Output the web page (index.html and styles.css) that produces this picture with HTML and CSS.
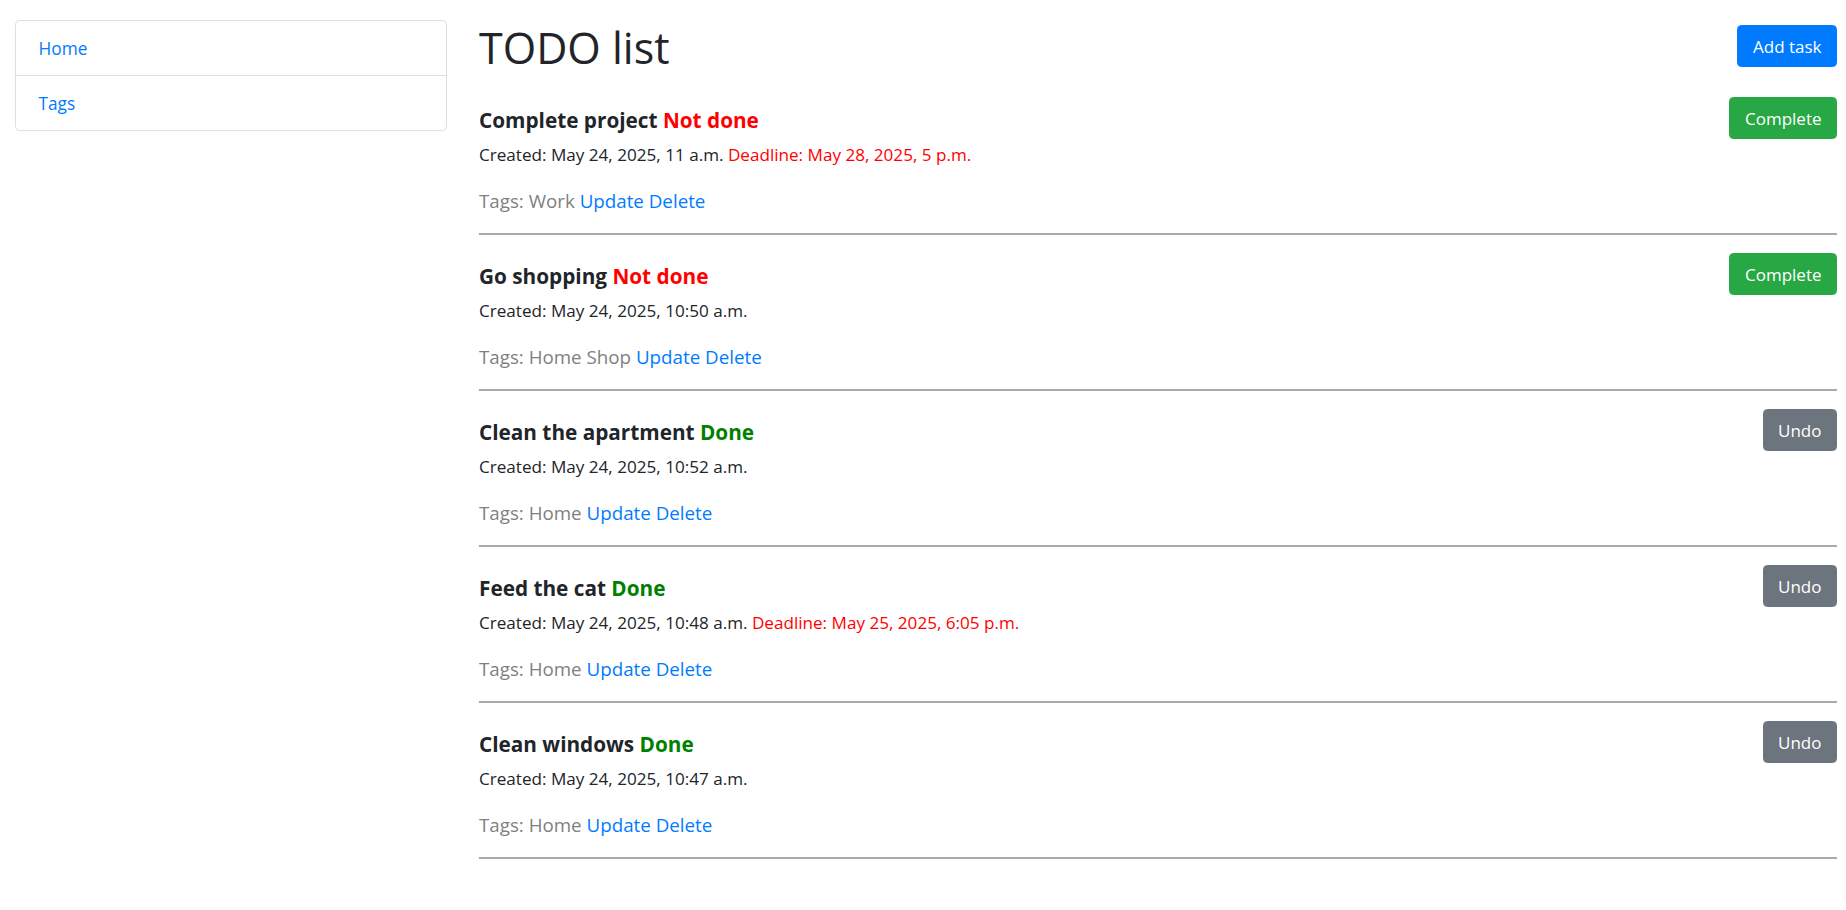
FILE: index.html
```html
<!DOCTYPE html>
<html lang="en">
<head>
<meta charset="utf-8">
<title>TODO list</title>
<link rel="stylesheet" href="styles.css">
</head>
<body>
<div class="layout">
  <nav class="sidebar">
    <a class="nav-item" href="#">Home</a>
    <a class="nav-item" href="#">Tags</a>
  </nav>
  <main class="main">
    <div class="page-head">
      <h1 class="page-title">TODO list</h1>
      <a class="btn btn-primary" href="#">Add task</a>
    </div>

    <div class="task">
      <div class="task-head">
        <h5 class="task-title">Complete project <span class="status not-done">Not done</span></h5>
        <button class="btn btn-success">Complete</button>
      </div>
      <p class="task-meta">Created: May 24, 2025, 11 a.m. <span class="deadline">Deadline: May 28, 2025, 5 p.m.</span></p>
      <p class="task-tags">Tags: Work <a href="#">Update</a> <a href="#">Delete</a></p>
    </div>
    <hr class="divider">

    <div class="task">
      <div class="task-head">
        <h5 class="task-title">Go shopping <span class="status not-done">Not done</span></h5>
        <button class="btn btn-success">Complete</button>
      </div>
      <p class="task-meta">Created: May 24, 2025, 10:50 a.m.</p>
      <p class="task-tags">Tags: Home Shop <a href="#">Update</a> <a href="#">Delete</a></p>
    </div>
    <hr class="divider">

    <div class="task">
      <div class="task-head">
        <h5 class="task-title">Clean the apartment <span class="status done">Done</span></h5>
        <button class="btn btn-secondary">Undo</button>
      </div>
      <p class="task-meta">Created: May 24, 2025, 10:52 a.m.</p>
      <p class="task-tags">Tags: Home <a href="#">Update</a> <a href="#">Delete</a></p>
    </div>
    <hr class="divider">

    <div class="task">
      <div class="task-head">
        <h5 class="task-title">Feed the cat <span class="status done">Done</span></h5>
        <button class="btn btn-secondary">Undo</button>
      </div>
      <p class="task-meta">Created: May 24, 2025, 10:48 a.m. <span class="deadline">Deadline: May 25, 2025, 6:05 p.m.</span></p>
      <p class="task-tags">Tags: Home <a href="#">Update</a> <a href="#">Delete</a></p>
    </div>
    <hr class="divider">

    <div class="task">
      <div class="task-head">
        <h5 class="task-title">Clean windows <span class="status done">Done</span></h5>
        <button class="btn btn-secondary">Undo</button>
      </div>
      <p class="task-meta">Created: May 24, 2025, 10:47 a.m.</p>
      <p class="task-tags">Tags: Home <a href="#">Update</a> <a href="#">Delete</a></p>
    </div>
    <hr class="divider">
  </main>
</div>
</body>
</html>
```

FILE: styles.css
```css
html, body {
  margin: 0;
  padding: 0;
  background: #fff;
}

body {
  font-family: "Open Sans", "Noto Sans", sans-serif;
  font-size: 18px;
  line-height: 27px;
  color: #212529;
}

a {
  color: #007bff;
  text-decoration: none;
}

.layout {
  display: flex;
  align-items: flex-start;
  gap: 32px;
  padding: 20px 9px 0 15px;
}

.sidebar {
  flex: none;
  width: 430px;
  display: flex;
  flex-direction: column;
  border: 1px solid #dfdfdf;
  border-radius: 4.5px;
}

.nav-item {
  display: block;
  padding: 13.5px 22.5px;
  font-size: 17.3px;
  line-height: 27px;
}

.nav-item + .nav-item {
  border-top: 1px solid #dfdfdf;
}

.main {
  flex: 1;
  min-width: 0;
}

.page-head {
  display: flex;
  justify-content: space-between;
  align-items: flex-start;
  margin-bottom: 23px;
}

.page-title {
  margin: 0;
  padding-top: 2px;
  height: 52px;
  font-size: 43px;
  line-height: 52px;
  font-weight: 400;
}

.btn {
  display: inline-block;
  font-family: inherit;
  font-size: 17px;
  line-height: 27px;
  padding: 6.5px 14.5px;
  border: 1px solid transparent;
  border-radius: 4.5px;
  color: #fff;
  cursor: pointer;
}

.page-head .btn {
  margin-top: 5px;
}

.btn-primary {
  background: #007bff;
  border-color: #007bff;
}

.btn-success {
  background: #28a745;
  border-color: #28a745;
}

.btn-secondary {
  background: #6c757d;
  border-color: #6c757d;
}

.task-head {
  display: flex;
  justify-content: space-between;
  align-items: center;
  height: 42px;
}

.task-title {
  margin: 0;
  padding-top: 3px;
  font-size: 20.75px;
  line-height: 24px;
  font-weight: 700;
}

.status.not-done {
  color: #ff0000;
}

.status.done {
  color: #008000;
}

.task-meta {
  margin: 3.5px 0 0;
  font-size: 17.1px;
  line-height: 24px;
}

.deadline {
  color: #ff0000;
}

.task-tags {
  margin: 20.5px 0 0;
  font-size: 18.75px;
  line-height: 28px;
  color: #808080;
}

.divider {
  border: 0;
  border-top: 2px solid #aaa;
  margin: 18px 0;
  height: 0;
}
```
